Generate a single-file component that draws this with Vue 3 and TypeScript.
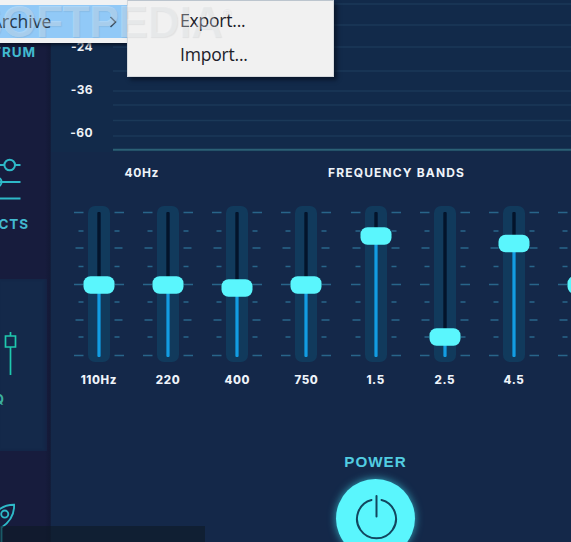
<script setup lang="ts">
interface Band {
  label: string
  level: number
}

const bands: Band[] = [
  { label: '110Hz', level: 79 },
  { label: '220', level: 79 },
  { label: '400', level: 82 },
  { label: '750', level: 79 },
  { label: '1.5', level: 30 },
  { label: '2.5', level: 131 },
  { label: '4.5', level: 37.5 },
  { label: '7', level: 79 },
]

const ticks = [6.5, 25, 42, 60.5, 78.5, 96, 114, 131, 149.5].map((y, i) => ({
  y,
  length: i % 2 ? 5 : i % 4 ? 8 : 9.5,
}))

const gridLines = [4, 25, 47, 71, 91, 105, 120.5, 136]
const scale = ['-24', '-36', '-60']
const submenu = ['Export...', 'Import...']
</script>

<template>
  <div class="app">
    <nav class="sidebar">
      <div class="tab spectrum"><span class="tab-label">SPECTRUM</span></div>
      <div class="tab effects">
        <svg class="icon" width="30" height="50" viewBox="0 0 30 50">
          <path d="M0 11H4M15 11H20.500M0 28H20.500M0 44.500H20.500" />
          <circle cx="9.700" cy="11" r="5.300" />
          <circle cx="-3" cy="28" r="4.500" />
        </svg>
        <span class="tab-label">EFFECTS</span>
      </div>
      <div class="tab eq active">
        <svg class="icon green" width="30" height="50" viewBox="0 0 30 50">
          <path d="M10.500 2V6M5.500 6H15.500V17H5.500ZM10.500 17V45" />
        </svg>
        <span class="tab-label eq-label">EQ</span>
      </div>
      <div class="tab boost">
        <svg class="icon" width="30" height="44" viewBox="0 0 30 44">
          <path d="M-8 17C-3 7 5 4 14 4C14.500 14 9 23 0 29M0.500 27V44" />
          <circle cx="4" cy="14" r="3.800" />
        </svg>
      </div>
    </nav>

    <main class="panel">
      <section class="graph">
        <div class="scale">
          <span v-for="value in scale" :key="value">{{ value }}</span>
        </div>
        <svg class="grid" width="458" height="152" viewBox="0 0 458 152">
          <path v-for="y in gridLines" :key="y" :d="`M0 ${y}H458`" />
          <path class="baseline" d="M0 149.800H458" />
        </svg>
      </section>

      <header class="captions">
        <span class="low">40Hz</span>
        <span class="title">FREQUENCY BANDS</span>
      </header>

      <section class="bands">
        <div v-for="band in bands" :key="band.label" class="band">
          <svg width="54" height="156" viewBox="-27 0 54 156">
            <g class="ticks">
              <path
                v-for="tick in ticks"
                :key="tick.y"
                :d="`M${-15.5 - tick.length} ${tick.y}h${tick.length}M15.500 ${tick.y}h${tick.length}`"
              />
            </g>
            <rect class="track" x="-11" y="0" width="22" height="156" rx="7" />
            <rect class="slot" x="-1.700" y="6" width="3.400" height="145" rx="1" />
            <rect class="fill" x="-1.700" :y="band.level" width="3.400" :height="151 - band.level" rx="1" />
            <rect class="knob" x="-15.500" :y="band.level - 8.8" width="31" height="17.600" rx="7" />
          </svg>
          <span class="band-label">{{ band.label }}</span>
        </div>
      </section>

      <section class="power">
        <span class="power-label">POWER</span>
        <button class="power-button" aria-label="Power">
          <svg width="44" height="48" viewBox="-22 -24 44 48">
            <path d="M-4.500 -19A19.500 19.500 0 1 0 5.500 -19M0.500 -23V-2.500" />
          </svg>
        </button>
      </section>
    </main>

    <div class="status-strip"></div>

    <div class="menu">
      <div class="menu-item">
        <span class="menu-text">Archive</span>
        <svg class="chevron" width="8" height="12" viewBox="0 0 8 12"><path d="M1.500 1L6.500 6L1.500 11" /></svg>
      </div>
    </div>
    <div class="submenu">
      <span v-for="entry in submenu" :key="entry">{{ entry }}</span>
    </div>
    <div class="watermark">SOFTPEDIA<sup>®</sup></div>
  </div>
</template>

<style>
body {
  margin: 0;
  overflow: hidden;
}
</style>

<style scoped>
.app {
  position: relative;
  display: flex;
  width: 571px;
  height: 542px;
  overflow: hidden;
  background: #142849;
  font-family: Inter, "Liberation Sans", sans-serif;
}
.sidebar {
  display: flex;
  flex-direction: column;
  flex: none;
  width: 51px;
  overflow: hidden;
  background: linear-gradient(90deg, #171c3d 0 45px, #131936 50px, #13223f);
}
.tab {
  display: flex;
  flex-direction: column;
  flex: none;
  box-sizing: border-box;
  width: 47px;
}
.spectrum {
  height: 154px;
  padding-top: 44px;
}
.effects {
  height: 125px;
}
.eq {
  height: 172px;
  padding-top: 51px;
}
.active {
  background: #14294a;
  box-shadow: inset -2px 0 3px #152344;
}
.boost {
  height: 91px;
  padding-top: 50px;
}
.tab-label {
  align-self: flex-end;
  margin-right: 11px;
  color: #42b9cf;
  font-size: 13.500px;
  font-weight: 700;
  line-height: 16px;
  letter-spacing: 0.900px;
}
.effects .tab-label {
  margin-top: 12px;
  margin-right: 18px;
}
.tab .eq-label {
  margin-top: 11px;
  margin-right: 42px;
  color: #3bb09e;
}
.icon {
  display: block;
  fill: none;
  stroke: #2eb9c8;
  stroke-width: 2;
}
.green {
  stroke: #1fc9ae;
  stroke-width: 1.700;
}
.panel {
  display: flex;
  flex-direction: column;
  flex: none;
  width: 520px;
}
.graph {
  display: flex;
  flex: none;
  height: 152px;
  background: #122a4a;
}
.scale {
  display: grid;
  grid-template-rows: repeat(3, 43px);
  align-items: center;
  justify-items: end;
  box-sizing: border-box;
  width: 62px;
  padding: 25px 20px 0 0;
  color: #f0f3f7;
  font-size: 12px;
  font-weight: 700;
  letter-spacing: 0.400px;
}
.grid {
  flex: none;
  fill: none;
  stroke: #1b3958;
  stroke-width: 1.700;
}
.baseline {
  stroke: #2b6075;
  stroke-width: 2;
}
.captions {
  display: flex;
  flex: none;
  height: 54px;
  padding-left: 73.500px;
  color: #eef3f9;
  font-size: 12px;
  font-weight: 700;
  line-height: 41px;
}
.low {
  width: 203.500px;
  letter-spacing: 0.600px;
}
.title {
  letter-spacing: 1.150px;
  white-space: nowrap;
}
.bands {
  display: grid;
  flex: none;
  grid-template-columns: repeat(8, 69.200px);
  height: 247px;
  padding-left: 13.300px;
}
.band {
  display: flex;
  flex-direction: column;
  align-items: center;
}
.ticks {
  fill: none;
  stroke: #28658a;
  stroke-width: 1.500;
}
.track {
  fill: #113a5c;
}
.slot {
  fill: #03142b;
}
.fill {
  fill: #139de2;
}
.knob {
  fill: #5af6fd;
}
.band-label {
  margin-top: 10px;
  color: #eef3f9;
  font-size: 11.500px;
  font-weight: 800;
  line-height: 16px;
  letter-spacing: 0.600px;
}
.power {
  display: flex;
  flex-direction: column;
  align-items: center;
  width: 649px;
}
.power-label {
  color: #52cde1;
  font-family: "Liberation Sans", sans-serif;
  font-size: 15.200px;
  font-weight: 700;
  line-height: 18px;
  letter-spacing: 1px;
}
.power-button {
  display: grid;
  flex: none;
  place-items: center;
  width: 79px;
  height: 79px;
  margin-top: 8px;
  padding: 0;
  border: 0;
  border-radius: 50%;
  background: #5af6fd;
  box-shadow: 0 0 9px #35a9bf;
}
.power-button path {
  fill: none;
  stroke: #12465f;
  stroke-width: 2;
  stroke-linecap: round;
}
.status-strip {
  position: absolute;
  top: 526px;
  left: 0;
  width: 205px;
  height: 16px;
  background: rgba(13, 25, 36, 0.600);
}
.menu {
  position: absolute;
  top: 0;
  left: 0;
  box-sizing: border-box;
  width: 127px;
  height: 43px;
  padding-top: 5px;
  background: #f1f2f3;
  box-shadow: 0 2px 3px rgba(4, 12, 27, 0.700);
}
.menu-item {
  display: flex;
  align-items: center;
  justify-content: space-between;
  height: 33px;
  padding-right: 10px;
  background: #91c9f7;
}
.menu-text {
  margin: -2px 0 0 -9px;
  color: #263849;
  font: 17.500px "Open Sans", sans-serif;
}
.chevron {
  fill: none;
  stroke: #355067;
  stroke-width: 1.500;
}
.submenu {
  position: absolute;
  top: 0;
  left: 127px;
  display: grid;
  grid-template-rows: 34px 34px;
  align-items: center;
  box-sizing: border-box;
  width: 207px;
  height: 77px;
  padding: 2px 0 0 52px;
  border: 1px solid #d5d9dd;
  border-top-color: #bcc5ce;
  background: #f1f1f1;
  box-shadow: 3px 3px 4px rgba(4, 12, 27, 0.650);
  color: #202028;
  font: 17.500px "Open Sans", sans-serif;
  letter-spacing: -0.200px;
}
.watermark {
  position: absolute;
  top: -4px;
  left: -27px;
  color: rgba(248, 250, 252, 0.300);
  font: 700 44px/52px "Liberation Sans", sans-serif;
  letter-spacing: -0.300px;
  text-shadow: 1px 1px 1px rgba(60, 70, 80, 0.090);
  white-space: nowrap;
}
.watermark sup {
  font-size: 12px;
  line-height: 1;
  vertical-align: 20px;
}
</style>
